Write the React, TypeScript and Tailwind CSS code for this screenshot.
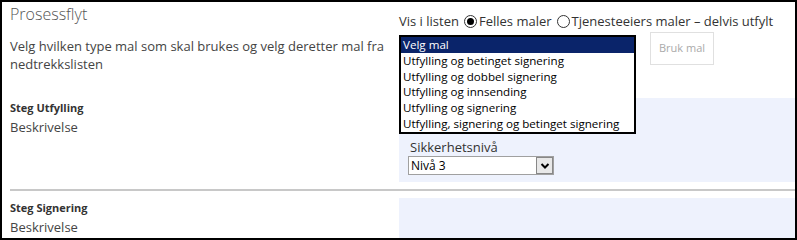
import React from "react";

const font = { fontFamily: '"Open Sans", "Noto Sans", sans-serif' };

function Radio({ checked }: { checked?: boolean }) {
  return (
    <span className="inline-flex items-center justify-center w-[13px] h-[13px] rounded-full border border-[#333] bg-white mr-[2px]">
      {checked && <span className="w-[7px] h-[7px] rounded-full bg-black" />}
    </span>
  );
}

export default function App() {
  const items = [
    "Utfylling og betinget signering",
    "Utfylling og dobbel signering",
    "Utfylling og innsending",
    "Utfylling og signering",
    "Utfylling, signering og betinget signering",
  ];
  return (
    <div
      className="w-[797px] h-[240px] border-2 border-black bg-white overflow-hidden text-[#444]"
      style={font}
    >
      {/* Header row */}
      <div className="flex h-[96px]">
        <div className="w-[397px] pl-[8px] pt-[1px]">
          <div className="text-[16px] font-light leading-[22px] text-[#555]">Prosessflyt</div>
          <div className="mt-[12px] text-[13px] leading-[18px] text-[#444]">
            Velg hvilken type mal som skal brukes og velg deretter mal fra nedtrekkslisten
          </div>
        </div>
        <div className="flex-1 pt-[10px]">
          <div className="flex items-center text-[13px] leading-[18px] text-[#333]">
            <span className="mr-[5px]">Vis i listen</span>
            <Radio checked />
            <span className="mr-[5px]">Felles maler</span>
            <Radio />
            <span>Tjenesteeiers maler – delvis utfylt</span>
          </div>
          <div className="flex mt-[5px]">
            <div className="relative w-[237px] h-[16px]">
              <div className="absolute left-0 top-0 w-[237px] border-2 border-black bg-white z-10 text-[11.6px] leading-[15.8px] text-black">
                <div className="bg-[#0a246a] text-white pl-[2px]">Velg mal</div>
                {items.map((t) => (
                  <div key={t} className="pl-[2px] whitespace-nowrap">
                    {t}
                  </div>
                ))}
              </div>
            </div>
            <div className="ml-[14px] -mt-[3px] w-[64px] h-[33px] border border-[#e0e0e0] flex items-center justify-center text-[11px] text-[#aaa]">
              Bruk mal
            </div>
          </div>
        </div>
      </div>

      {/* Steg Utfylling */}
      <div className="flex h-[84px]">
        <div className="w-[397px] pl-[8px] pt-[2px]">
          <div className="text-[11px] font-bold leading-[16px] text-[#333]">Steg Utfylling</div>
          <div className="mt-[2px] text-[13px] leading-[18px] text-[#444]">Beskrivelse</div>
        </div>
        <div className="flex-1 bg-[#eef2fd] flex flex-col justify-end pb-[7px] pl-[9px]">
          <div className="text-[13px] leading-[17px] text-[#333] pl-[2px]">Sikkerhetsnivå</div>
          <div className="flex w-[146px] h-[19px] border border-[#a0a0a0] bg-white">
            <div className="flex-1 text-[12px] leading-[17px] pl-[2px] text-black">Nivå 3</div>
            <div className="w-[17px] h-[17px] bg-[#e8e8e8] border border-[#888] flex items-center justify-center">
              <svg width="10" height="8" viewBox="0 0 10 8">
                <path d="M1.5 2 L5 5.5 L8.5 2" stroke="#000" strokeWidth="2" fill="none" />
              </svg>
            </div>
          </div>
        </div>
      </div>

      {/* Divider */}
      <div className="ml-[8px] mt-[7px] mb-[7px] border-t-2 border-[#c8c8c8]" />

      {/* Steg Signering */}
      <div className="flex h-[44px]">
        <div className="w-[397px] pl-[8px] pt-[2px]">
          <div className="text-[11px] font-bold leading-[16px] text-[#333]">Steg Signering</div>
          <div className="mt-[2px] text-[13px] leading-[18px] text-[#444]">Beskrivelse</div>
        </div>
        <div className="flex-1 bg-[#eef2fd]" />
      </div>
    </div>
  );
}
